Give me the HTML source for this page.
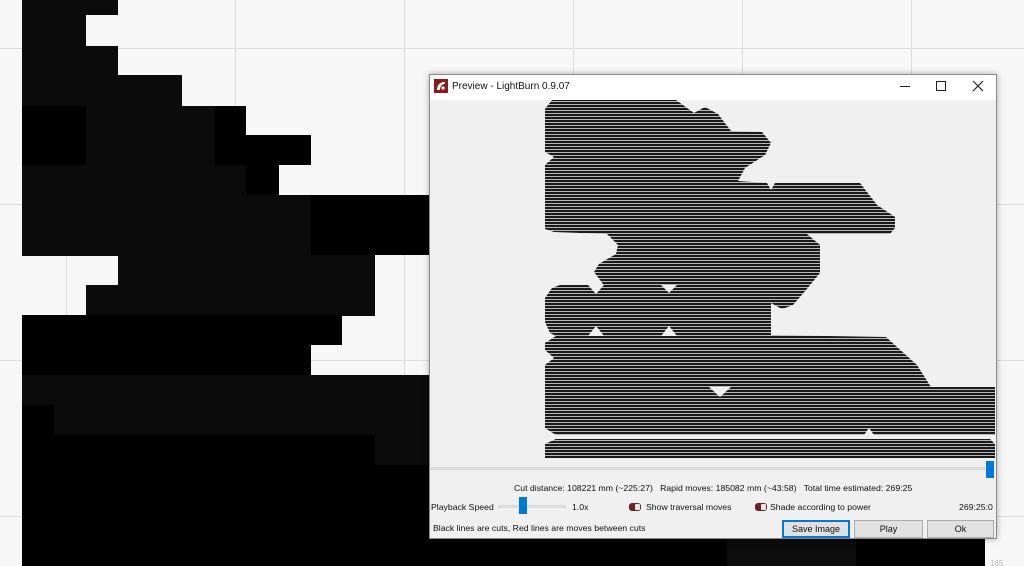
<!DOCTYPE html>
<html><head><meta charset="utf-8"><style>
*{margin:0;padding:0;box-sizing:border-box}
body{width:1024px;height:566px;overflow:hidden;background:#f7f7f7;position:relative;font-family:"Liberation Sans",sans-serif;}
.t{position:absolute;font-size:8.7px;color:#111;white-space:nowrap;line-height:11px}
.btn{position:absolute;top:520px;height:18px;background:#e1e1e1;border:1px solid #adadad;font-size:9px;text-align:center;line-height:16px;color:#111}
.tog{position:absolute;width:12px;height:8px;border-radius:3px;background:#6b2424}
.tog:after{content:"";position:absolute;right:1px;top:1px;width:5px;height:6px;background:#e9e9e9;border-radius:1px}
</style></head><body>
<svg width="1024" height="566" style="position:absolute;left:0;top:0">
<g stroke="#dcdcdc" stroke-width="1">
<line x1="0" y1="48.5" x2="1024" y2="48.5"/><line x1="0" y1="204.5" x2="1024" y2="204.5"/><line x1="0" y1="360.5" x2="1024" y2="360.5"/><line x1="0" y1="516.5" x2="1024" y2="516.5"/>
<line x1="235.5" y1="0" x2="235.5" y2="566"/><line x1="404.5" y1="0" x2="404.5" y2="566"/><line x1="573.5" y1="0" x2="573.5" y2="566"/><line x1="742.5" y1="0" x2="742.5" y2="566"/><line x1="911.5" y1="0" x2="911.5" y2="566"/><line x1="66.5" y1="0" x2="66.5" y2="566"/>
</g>
<g fill="#0b0b0b">
<rect x="22" y="0" width="96" height="15"/><rect x="22" y="15" width="64" height="31"/><rect x="22" y="46" width="96" height="30"/><rect x="22" y="75" width="160" height="31"/><rect x="22" y="106" width="193" height="60"/><rect x="22" y="165" width="224" height="31"/><rect x="22" y="195" width="289" height="61"/><rect x="118" y="255" width="257" height="31"/><rect x="86" y="285" width="289" height="31"/><rect x="22" y="375" width="408" height="31"/><rect x="54" y="405" width="376" height="31"/><rect x="375" y="435" width="55" height="31"/>
</g>
<g fill="#000">
<rect x="22" y="106" width="64" height="59"/><rect x="215" y="106" width="31" height="30"/><rect x="215" y="135" width="96" height="30"/><rect x="246" y="165" width="33" height="30"/><rect x="311" y="195" width="119" height="60"/><rect x="22" y="315" width="320" height="30"/><rect x="22" y="345" width="289" height="30"/><rect x="22" y="405" width="32" height="30"/><rect x="22" y="435" width="353" height="30"/><rect x="22" y="465" width="408" height="101"/><rect x="430" y="539" width="555" height="27"/>
</g>
<rect x="727" y="539" width="129" height="27" fill="#0c0c0c"/>
<text x="990" y="566" font-size="8" fill="#bbb" font-family="Liberation Sans">165</text>
</svg>
<div style="position:absolute;left:429px;top:74px;width:568px;height:465px;background:#f0f0f0;border:1px solid #8a8a8a;box-shadow:0 0 6px rgba(0,0,0,.3)"></div>
<div style="position:absolute;left:430px;top:75px;width:566px;height:25px;background:#fff"></div>
<svg width="14" height="14" style="position:absolute;left:434px;top:79px" viewBox="0 0 14 14"><rect width="14" height="14" fill="#8b1a1a"/><path d="M3 11 C3 6 6 3 11 3 L11 5 C8 5 6 7 6 11 Z" fill="#fff"/><circle cx="9" cy="9" r="1.6" fill="#fff"/></svg>
<div class="t" style="left:452px;top:81px;font-size:10px">Preview - LightBurn 0.9.07</div>
<div style="position:absolute;left:900px;top:86px;width:10px;height:1px;background:#222"></div>
<div style="position:absolute;left:936px;top:81px;width:10px;height:10px;border:1px solid #222"></div>
<svg width="12" height="12" style="position:absolute;left:972px;top:80px"><path d="M1 1L11 11M11 1L1 11" stroke="#222" stroke-width="1.2"/></svg>
<svg width="1024" height="566" style="position:absolute;left:0;top:0">
<defs><pattern id="h" width="4" height="3" patternUnits="userSpaceOnUse"><rect width="4" height="3" fill="#b8b8b8"/><rect width="4" height="2" fill="#1a1a1a"/></pattern></defs>
<path fill="url(#h)" d="M552,100 L676,100 L694,113 L705,107 L718,114 L731,131 L762,132 L771,143 L765,155 L745,168 L738,181 L767,183 L771,190 L775,183 L860,183 L877,205 L895,217 L895,228 L890,234 L807,234 L820,245 L820,273 L806,290 L793,305 L782,309 L771,303 L771,335 L886,337 L917,365 L931,387 L995,387 L995,435 L874,435 L869,428 L864,435 L556,435 L545,428 L545,365 L554,358 L545,350 L545,343 L556,336 L550,333 L545,322 L545,298 L552,288 L560,285 L603,285 L603,284 L594,272 L599,264 L616,254 L618,245 L607,234 L554,232 L545,229 L545,165 L554,157 L545,152 L545,109 Z"/>
<path fill="url(#h)" d="M556,439 L990,439 L995,444 L995,458 L545,458 L545,444 Z"/>
<g fill="#f0f0f0"><path d="M709,387 L731,387 L720,397Z"/><path d="M588,285 L604,285 L596,294Z"/><path d="M661,285 L677,285 L669,293Z"/><path d="M588,336 L604,336 L596,326Z"/><path d="M661,336 L677,336 L669,326Z"/></g>
</svg>
<div style="position:absolute;left:431px;top:467px;width:554px;height:3px;border:1px solid #d6d6d6;background:#e6e6e6"></div>
<div style="position:absolute;left:986px;top:461px;width:8px;height:17px;background:#0078d7"></div>
<div class="t" style="left:514px;top:483px">Cut distance: 108221 mm (~225:27)&nbsp;&nbsp; Rapid moves: 185082 mm (~43:58)&nbsp;&nbsp; Total time estimated: 269:25</div>
<div class="t" style="left:431px;top:502px">Playback Speed</div>
<div style="position:absolute;left:498px;top:505px;width:68px;height:3px;border:1px solid #d6d6d6;background:#e6e6e6"></div>
<div style="position:absolute;left:519px;top:497px;width:8px;height:17px;background:#0078d7"></div>
<div class="t" style="left:572px;top:502px">1.0x</div>
<div class="tog" style="left:629px;top:503px"></div>
<div class="t" style="left:646px;top:502px">Show traversal moves</div>
<div class="tog" style="left:755px;top:503px"></div>
<div class="t" style="left:770px;top:502px">Shade according to power</div>
<div class="t" style="left:959px;top:502px">269:25:0</div>
<div class="t" style="left:433px;top:523px">Black lines are cuts, Red lines are moves between cuts</div>
<div class="btn" style="left:782px;width:68px;border:2px solid #0078d7;line-height:14px">Save Image</div>
<div class="btn" style="left:854px;width:69px">Play</div>
<div class="btn" style="left:927px;width:67px">Ok</div>
</body></html>
